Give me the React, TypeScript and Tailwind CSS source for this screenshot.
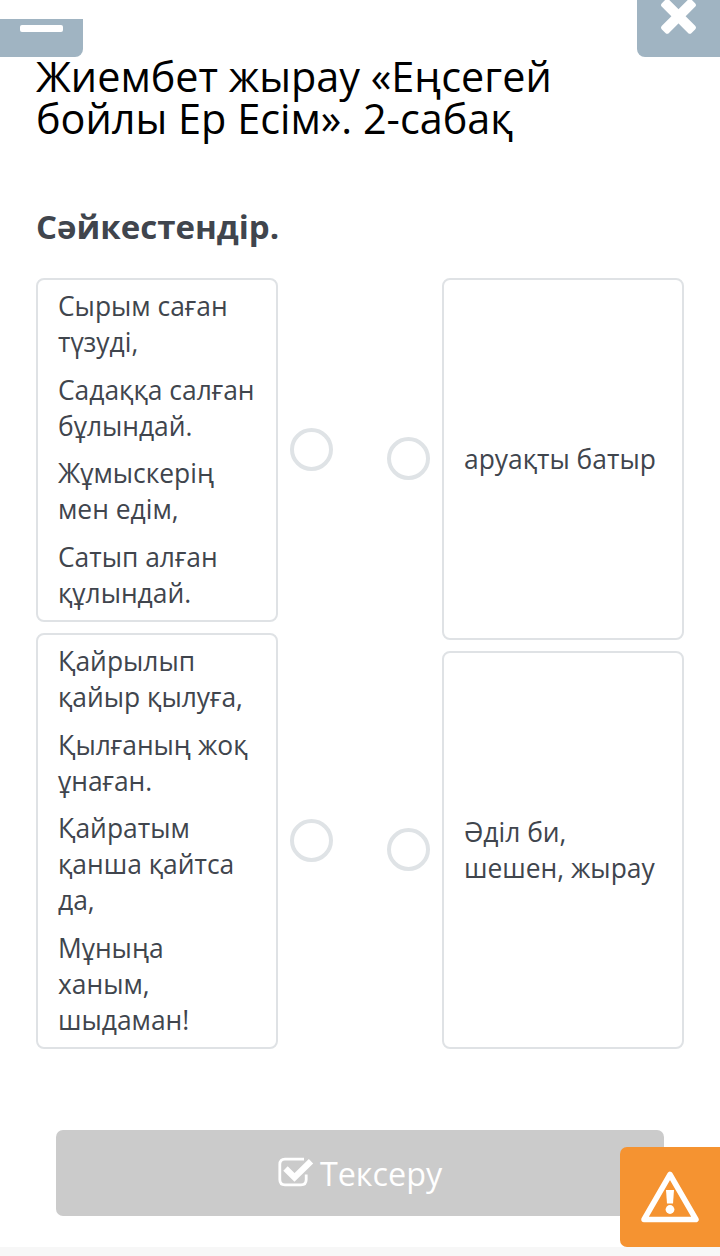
const left = [
  { lines: [["Сырым саған", "түзуді,"], ["Садаққа салған", "бұлындай."], ["Жұмыскерің", "мен едім,"], ["Сатып алған", "құлындай."]], box: "h-[344px]" },
  { lines: [["Қайрылып", "қайыр қылуға,"], ["Қылғаның жоқ", "ұнаған."], ["Қайратым", "қанша қайтса", "да,"], ["Мұныңа", "ханым,", "шыдаман!"]], box: "h-[416px]" },
];
const right = [
  { lines: ["аруақты батыр"], box: "h-[362px]" },
  { lines: ["Әділ би,", "шешен, жырау"], box: "h-[398px]" },
];

function Ring() {
  return <span className="-mt-[1px] block size-[43px] rounded-full border-4 border-[#dfe3e6]" />;
}

export default function App() {
  return (
    <main className="flex h-[1256px] w-[720px] flex-col overflow-hidden bg-white font-['Open_Sans','Noto_Sans',sans-serif] text-[#40454d]">
      <header className="flex h-[57px] shrink-0 items-start justify-between">
        <button className="mt-[19px] flex h-[38px] w-[83px] items-start justify-center rounded-br-[8px] bg-[#a0b4c2] pt-[6px]">
          <span className="block h-[7px] w-[43px] rounded-[2px] bg-white" />
        </button>
        <button className="flex h-[57px] w-[83px] items-start justify-center overflow-hidden rounded-bl-[8px] bg-[#a0b4c2]">
          <svg viewBox="0 0 40 40" className="-mt-[4px] size-[40px] shrink-0" fill="white">
            <rect x="-1" y="15" width="42" height="10" rx="2.5" transform="translate(-0.5 0.3) rotate(45 20 20)" />
            <rect x="-1" y="15" width="42" height="10" rx="2.5" transform="translate(-0.5 0.3) rotate(-45 20 20)" />
          </svg>
        </button>
      </header>
      <h1 className="-mt-[2px] h-[84px] shrink-0 pl-[36px] text-[41.4px] leading-[42px] whitespace-nowrap text-black">
        <span className="block">Жиембет жырау «Еңсегей</span>
        <span className="block">бойлы Ер Есім». 2-сабақ</span>
      </h1>
      <h2 className="mt-[64px] h-[48px] shrink-0 pl-[36px] text-[33px] leading-[48px] font-bold">Сәйкестендір.</h2>
      <section className="mt-[27px] flex h-[771px] shrink-0 justify-between px-[36px]">
        <div className="flex flex-col gap-[11px]">
          {left.map((item, i) => (
            <div key={i} className="flex items-center gap-[12px]">
              <div className={`w-[242px] shrink-0 rounded-[8px] border-2 border-[#dfe2e5] pt-[8px] pl-[20px] text-[26.4px] leading-[36px] whitespace-nowrap ${item.box}`}>
                {item.lines.map((p, j) => (
                  <p key={j} className="mb-[11.7px]">
                    {p.map((line) => <span key={line} className="block">{line}</span>)}
                  </p>
                ))}
              </div>
              <Ring />
            </div>
          ))}
        </div>
        <div className="flex flex-col gap-[11px]">
          {right.map((item, i) => (
            <div key={i} className="flex items-center gap-[12px]">
              <Ring />
              <div className={`flex w-[242px] flex-col justify-center rounded-[8px] border-2 border-[#dfe2e5] pl-[20px] text-[26.4px] leading-[36px] whitespace-nowrap ${item.box}`}>
                {item.lines.map((line) => <span key={line}>{line}</span>)}
              </div>
            </div>
          ))}
        </div>
      </section>
      <footer className="relative mt-[81px] h-[126px] shrink-0 px-[56px]">
        <button className="flex h-[86px] w-[608px] items-center justify-center gap-[6px] rounded-[7px] bg-[#cbcbcb] text-[32.3px] text-white">
          <svg viewBox="0 0 36 32" className="mt-[-2px] h-[32px] w-[36px]" fill="none" stroke="white">
            <path d="M26 3.2 H7 Q1.8 3.2 1.8 8.5 V23.5 Q1.8 28.8 7 28.8 H23 Q28.2 28.8 28.2 23.5 V18.5" strokeWidth="2.8" />
            <path d="M7.5 12.5 L16.5 21.5 L33 5.2" strokeWidth="6.2" />
          </svg>
          <span>Тексеру</span>
        </button>
        <button className="absolute top-[17px] right-0 flex h-[100px] w-[100px] items-center justify-center rounded-l-[7px] bg-[#f59331]">
          <svg viewBox="0 0 60 54" className="h-[54px] w-[60px]" fill="none" stroke="white">
            <path d="M30 4.5 L56 49.5 H4 Z" strokeWidth="5.5" strokeLinejoin="round" />
            <path d="M26 20 H34 L33 33.5 H27 Z" fill="white" stroke="none" />
            <circle cx="30" cy="39.5" r="4.4" fill="white" stroke="none" />
          </svg>
        </button>
        <div className="absolute bottom-0 left-0 h-[9px] w-full bg-[#f7f7f7]" />
      </footer>
    </main>
  );
}
